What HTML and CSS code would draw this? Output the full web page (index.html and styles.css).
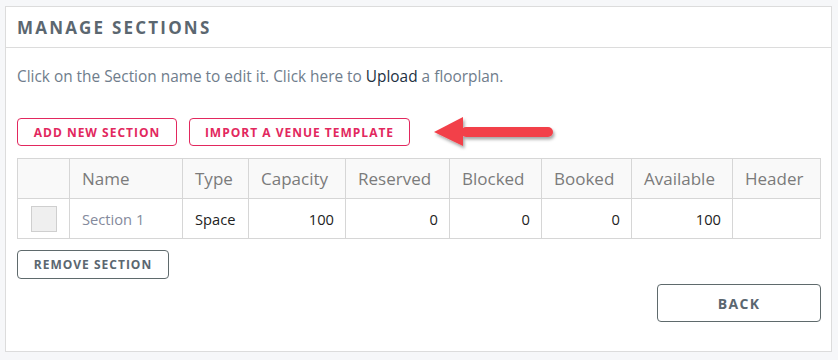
FILE: index.html
```html
<!DOCTYPE html>
<html>
<head>
<meta charset="utf-8">
<link rel="stylesheet" href="styles.css">
</head>
<body>
<div class="card">
  <div class="card-header">
    <h2 class="title">Manage Sections</h2>
  </div>
  <div class="card-body">
    <p class="intro">Click on the Section name to edit it. Click here to <a class="link">Upload</a> a floorplan.</p>
    <div class="actions">
      <button class="btn btn-pink btn-add">Add New Section</button>
      <button class="btn btn-pink btn-import">Import a Venue Template</button>
      <svg class="arrow" width="126" height="38" viewBox="0 0 126 38">
        <defs>
          <filter id="sh" x="-10%" y="-30%" width="130%" height="170%">
            <feDropShadow dx="1.5" dy="2.5" stdDeviation="1.6" flood-color="#000" flood-opacity="0.35"/>
          </filter>
        </defs>
        <g filter="url(#sh)" fill="#f2414a">
          <path d="M2 18 L31 3 L31 32 Z"/>
          <rect x="29" y="13" width="92" height="10" rx="5"/>
        </g>
      </svg>
    </div>
    <table class="grid">
      <colgroup>
        <col style="width:52px"><col style="width:113px"><col style="width:66px"><col style="width:97px"><col style="width:104px"><col style="width:92px"><col style="width:90px"><col style="width:101px"><col style="width:88px">
      </colgroup>
      <thead>
        <tr><th></th><th>Name</th><th>Type</th><th>Capacity</th><th>Reserved</th><th>Blocked</th><th>Booked</th><th>Available</th><th>Header</th></tr>
      </thead>
      <tbody>
        <tr>
          <td class="chk-cell"><span class="chk"></span></td>
          <td class="sec-name">Section 1</td>
          <td class="type">Space</td>
          <td class="num">100</td>
          <td class="num">0</td>
          <td class="num">0</td>
          <td class="num">0</td>
          <td class="num">100</td>
          <td></td>
        </tr>
      </tbody>
    </table>
    <div class="remove-row">
      <button class="btn btn-gray btn-remove">Remove Section</button>
    </div>
    <div class="back-row">
      <button class="btn btn-gray btn-back">Back</button>
    </div>
  </div>
</div>
</body>
</html>
```

FILE: styles.css
```css
html, body {
  margin: 0;
  padding: 0;
  background: #f6f7f9;
}
body {
  padding: 6px 6px 0 5px;
  font-family: "Open Sans", "DejaVu Sans", sans-serif;
}
.card {
  width: 825px;
  height: 344px;
  background: #fff;
  border: 1px solid #dcdcdc;
}
.card-header {
  height: 40px;
  border-bottom: 1px solid #dcdcdc;
  display: flex;
  align-items: center;
  padding-left: 11px;
}
.title {
  margin: 0;
  font-size: 17px;
  font-weight: 700;
  letter-spacing: 2.2px;
  text-transform: uppercase;
  color: #5b6770;
}
.card-body {
  padding: 0 10px 0 11px;
}
.intro {
  margin: 18px 0 0;
  font-size: 15.4px;
  line-height: 22px;
  color: #6f7d8c;
}
.link {
  color: #22303f;
}
.actions {
  display: flex;
  align-items: flex-start;
  gap: 12px;
  height: 28px;
  margin-top: 30px;
}
.btn {
  font-family: "Open Sans", "DejaVu Sans", sans-serif;
  font-weight: 700;
  text-transform: uppercase;
  background: #fff;
  border-radius: 4px;
  padding: 0;
  cursor: pointer;
  box-sizing: border-box;
}
.btn-pink {
  height: 28px;
  border: 1px solid #e2285e;
  color: #e2285e;
  font-size: 12px;
  letter-spacing: 1px;
}
.btn-add { width: 160px; }
.btn-import { width: 221px; }
.arrow {
  margin-left: 10px;
  margin-top: -4px;
  flex: none;
}
.grid {
  margin-top: 12px;
  border-collapse: collapse;
  table-layout: fixed;
  width: 803px;
}
.grid th, .grid td {
  border: 1px solid #d6d6d6;
  height: 40px;
  padding: 0 11px 0 12px;
  box-sizing: border-box;
}
.grid th {
  background: #f9f9f9;
  font-weight: 400;
  font-size: 17px;
  color: #7b7b7b;
  text-align: left;
}
.grid td {
  font-size: 14.7px;
  color: #333;
}
.chk-cell {
  text-align: center;
}
.chk {
  display: inline-block;
  width: 24px;
  height: 24px;
  background: #efefef;
  border: 1px solid #cfcfcf;
  vertical-align: middle;
}
.grid td.sec-name {
  color: #848a9c;
}
.grid td.type {
  color: #222;
}
.grid td.num {
  text-align: right;
  color: #222;
}
.remove-row {
  margin-top: 11px;
}
.btn-gray {
  border: 1px solid #5f6a6c;
  color: #5b6770;
}
.btn-remove {
  width: 152px;
  height: 29px;
  font-size: 12px;
  letter-spacing: 1px;
}
.back-row {
  display: flex;
  justify-content: flex-end;
  margin-top: 5px;
}
.btn-back {
  width: 164px;
  height: 38px;
  font-size: 14px;
  letter-spacing: 1.3px;
}
```
